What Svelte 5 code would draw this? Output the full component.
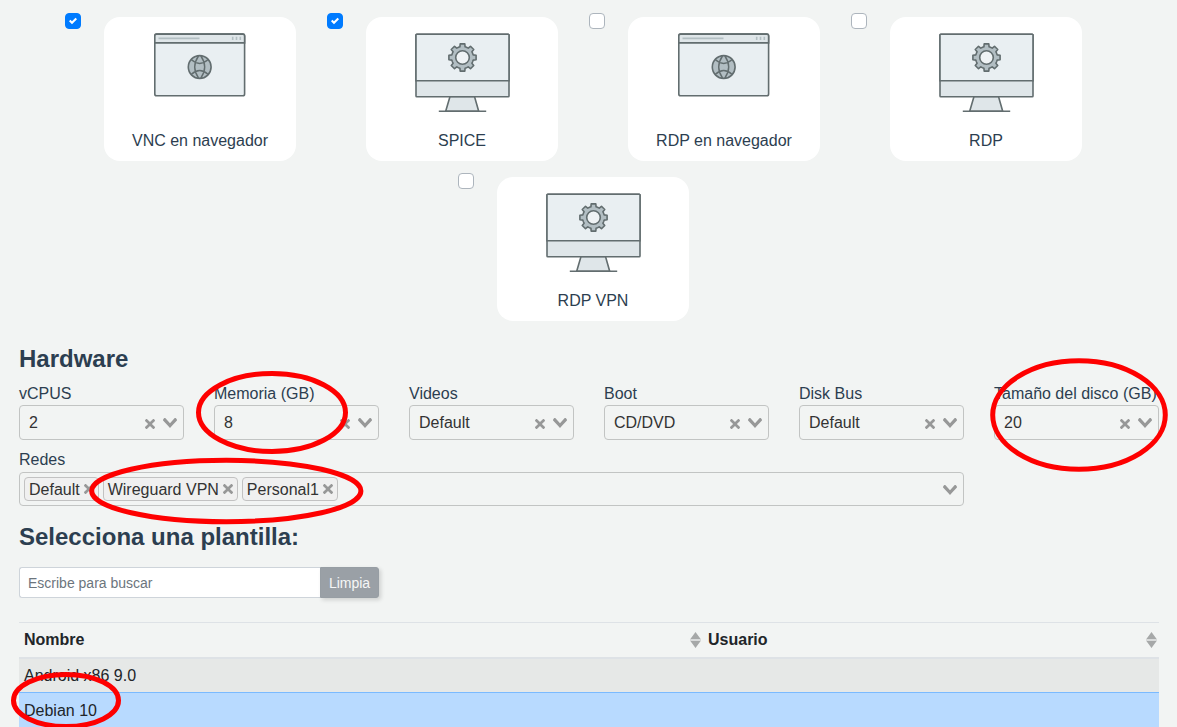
<script>
  const viewers = [
    { name: 'VNC en navegador', icon: 'browser', checked: true },
    { name: 'SPICE', icon: 'desktop', checked: true },
    { name: 'RDP en navegador', icon: 'browser', checked: false },
    { name: 'RDP', icon: 'desktop', checked: false },
    { name: 'RDP VPN', icon: 'desktop', checked: false }
  ];
  const hardware = [
    { label: 'vCPUS', value: '2' },
    { label: 'Memoria (GB)', value: '8' },
    { label: 'Videos', value: 'Default' },
    { label: 'Boot', value: 'CD/DVD' },
    { label: 'Disk Bus', value: 'Default' },
    { label: 'Tamaño del disco (GB)', value: '20' }
  ];
  const networks = ['Default', 'Wireguard VPN', 'Personal1'];
  const columns = ['Nombre', 'Usuario'];
  const templates = [
    { name: 'Android x86 9.0', selected: false },
    { name: 'Debian 10', selected: true }
  ];
  const marks = [
    { cx: 272, cy: 412.5, rx: 73.5, ry: 39 },
    { cx: 1079, cy: 415, rx: 86.3, ry: 54.2 },
    { cx: 226.3, cy: 491, rx: 134.6, ry: 30.7 },
    { cx: 66, cy: 700.5, rx: 52.5, ry: 26 }
  ];

  // Eight-tooth gear outline around the origin.
  const toothPoints = [[-4, -10.2], [-2.6, -10.7], [-2.3, -13.6], [2.3, -13.6], [2.6, -10.7], [4, -10.2]];
  const gear = Array.from({ length: 8 }, (_, i) => {
    const a = (i * Math.PI) / 4;
    return toothPoints
      .map(([x, y]) => `${(x * Math.cos(a) - y * Math.sin(a)).toFixed(2)},${(x * Math.sin(a) + y * Math.cos(a)).toFixed(2)}`)
      .join(' ');
  }).join(' ');
</script>

{#snippet cross()}
  <svg class="cross" width="10" height="10" viewBox="0 0 10 10"><path d="M6.895455 5l2.842897-2.842898c.348864-.348863.348864-.914488 0-1.263636L9.106534.261648c-.348864-.348864-.914489-.348864-1.263636 0L5 3.104545 2.157102.261648c-.348863-.348864-.914488-.348864-1.263636 0L.261648.893466c-.348864.348864-.348864.914489 0 1.263636L3.104545 5 .261648 7.842898c-.348864.348863-.348864.914488 0 1.263636l.631818.631818c.348864.348864.914773.348864 1.263636 0L5 6.895455l2.842898 2.842897c.348863.348864.914772.348864 1.263636 0l.631818-.631818c.348864-.348864.348864-.914489 0-1.263636L6.895455 5z" /></svg>
{/snippet}

{#snippet chevron()}
  <svg class="chevron" width="14" height="10" viewBox="0 0 14 10"><path d="M9.211364 7.59931l4.48338-4.867229c.407008-.441854.407008-1.158247 0-1.60046l-.73712-.80023c-.407008-.441854-1.066904-.441854-1.474243 0L7 5.198617 2.51662.33139c-.407008-.441853-1.066904-.441853-1.474243 0l-.737121.80023c-.407008.441854-.407008 1.158248 0 1.600461l4.48338 4.867228L7 10l2.211364-2.40069z" /></svg>
{/snippet}

<main>
  <section class="viewers">
    {#each viewers as v}
      <div class="viewer">
        <span class="check" class:on={v.checked}>
          {#if v.checked}
            <svg width="8" height="8" viewBox="0 0 8 8"><path fill="#fff" d="M6.564.75l-3.59 3.612-1.538-1.55L0 4.26l2.974 2.99L8 2.193z" /></svg>
          {/if}
        </span>
        <div class="card">
          {#if v.icon === 'browser'}
            <svg width="96" height="96" viewBox="0 -0.6 96 96" fill="none" stroke="#626d6f" stroke-width="1.6">
              <rect x="2.8" y="1.5" width="89.8" height="61.6" rx="1.8" fill="#e9eff2" />
              <path d="M2.8 10.300V3.200a1.8 1.8 0 0 1 1.8-1.7h86.2a1.8 1.8 0 0 1 1.8 1.7v7.100z" fill="#dfe6e9" />
              <path d="M6.500 5.800h41" stroke="#b3bfc3" />
              <path d="M80.700 4.200v3.200M84.500 4.200v3.200M88.300 4.200v3.200" stroke="#b3bfc3" />
              <g transform="translate(47.700 34.400)">
                <circle r="11.400" fill="#b2bec3" />
                <path d="M-1.200-11Q-8.800 0-1.200 11M1.200-11Q8.800 0 1.200 11M-8.500-7.500Q0 .300 8.500-7.500M-8.500 7.500Q0-.300 8.500 7.500" stroke-width="1.400" />
              </g>
            </svg>
          {:else}
            <svg width="96" height="96" viewBox="0 0 96 96" fill="none" stroke="#626d6f" stroke-width="1.600">
              <path d="M36 64.500h24.500L64.700 79.200h-33z" fill="#dfe6e9" />
              <path d="M24.800 79.200h47.400" />
              <rect x="2" y="2.200" width="93" height="62.500" rx=".8" fill="#dfe6e9" />
              <path d="M2 48.700V3a.8.8 0 0 1 .8-.8h91.400a.8.8 0 0 1 .8.8v45.700z" fill="#e9eff2" />
              <g transform="translate(48.500 25.500)">
                <polygon points={gear} fill="#b2bec3" stroke-linejoin="round" />
                <circle r="6.800" fill="#eff3f5" />
              </g>
            </svg>
          {/if}
          <p>{v.name}</p>
        </div>
      </div>
    {/each}
  </section>

  <h4>Hardware</h4>
  <section class="hardware">
    {#each hardware as h}
      <div class="field">
        <span class="label">{h.label}</span>
        <div class="select">
          <span class="value">{h.value}</span>
          {@render cross()}
          {@render chevron()}
        </div>
      </div>
    {/each}
  </section>

  <section class="networks">
    <span class="label">Redes</span>
    <div class="select multi">
      {#each networks as n}
        <span class="tag">{n}{@render cross()}</span>
      {/each}
      <span class="space"></span>
      {@render chevron()}
    </div>
  </section>

  <h4 class="second">Selecciona una plantilla:</h4>
  <div class="search">
    <input placeholder="Escribe para buscar" />
    <button>Limpia</button>
  </div>

  <div class="table">
    <div class="row head">
      {#each columns as c}
        <div class="cell">
          <span>{c}</span>
          <svg width="11" height="16" viewBox="0 0 11 16"><path d="M0 7.500L5.500 0 11 7.500z M0 8.500L5.500 16 11 8.500z" fill="#a6a8a8" /><path d="M.5 8h10" stroke="#d9dbdb" stroke-width="2" /></svg>
        </div>
      {/each}
    </div>
    {#each templates as t}
      <div class="row" class:selected={t.selected}>
        <div class="cell">{t.name}</div>
        <div class="cell"></div>
      </div>
    {/each}
  </div>

  <svg class="marks" width="1177" height="727" viewBox="0 0 1177 727">
    {#each marks as m}
      <ellipse cx={m.cx} cy={m.cy} rx={m.rx} ry={m.ry} fill="none" stroke="#fe0000" stroke-width="5" />
    {/each}
  </svg>
</main>

<style>
  :global(body) { margin: 0; overflow: hidden; background: #f2f4f3; }
  main {
    position: relative;
    box-sizing: border-box;
    width: 1177px;
    height: 727px;
    overflow: hidden;
    padding: 1px 18px 0 19px;
    font: 16px/24px "Liberation Sans", Arial, sans-serif;
    color: #2c3e50;
    background: #f2f4f3;
  }
  svg { display: block; flex: none; }
  .viewers { display: flex; flex-wrap: wrap; justify-content: center; width: 1048px; margin-left: 46px; }
  .viewer { display: flex; align-items: flex-start; width: 262px; height: 160px; }
  .check {
    display: flex; align-items: center; justify-content: center;
    box-sizing: border-box; width: 16px; height: 16px; margin-top: 12px;
    border: 1px solid #adb5bd; border-radius: 4px; background: #fff;
  }
  .check.on { border-color: #007bff; background: #007bff; }
  .card {
    display: flex; flex-direction: column; align-items: center;
    box-sizing: border-box; width: 192px; height: 144px; margin: 16px 0 0 23px; padding-top: 15px;
    border-radius: 16px; background: #fff;
  }
  .card p { margin: 1px 0 0; }
  h4 { margin: 23px 0 9px; font-size: 24px; line-height: 29px; font-weight: 700; }
  .hardware { display: flex; gap: 30px; }
  .field { width: 165px; }
  .label { display: block; height: 23px; white-space: nowrap; }
  .select {
    display: flex; align-items: center; box-sizing: border-box; height: 35px; padding: 0 6px 0 9px;
    border: 1px solid #c2c4c3; border-radius: 4px; color: #333;
  }
  .value { flex: 1; }
  .cross, .chevron { fill: #979898; }
  .select > .cross { margin: 3px 8px 0 0; }
  .networks { width: 945px; margin-top: 8px; }
  .multi { height: 34px; margin-top: 1px; padding-left: 4px; gap: 4px; }
  .multi .chevron { margin-top: 1px; }
  .tag {
    display: flex; align-items: center; gap: 4px; box-sizing: border-box; height: 24px; padding: 1px 4px 0;
    border: 1px solid #c2c2c2; border-radius: 4px; background: #f0f0f0; line-height: 22px;
  }
  .tag .cross { margin-bottom: 1px; }
  .space { flex: 1; }
  h4.second { margin: 16px 0; }
  .search { display: flex; width: 360px; height: 31px; }
  input, button { box-sizing: border-box; height: 31px; font: 14px/21px "Liberation Sans", Arial, sans-serif; padding: 4px 8px; }
  input { width: 301px; border: 1px solid #ced4da; border-right: 0; border-radius: 3px 0 0 3px; background: #fff; }
  input::placeholder { color: #6c757d; opacity: 1; }
  button { width: 59px; padding: 5px 7px 3px; border: 1px solid #979ea4; border-radius: 0 3px 3px 0; background: #9aa0a6; color: #f6f7f7; box-shadow: 2px 2px 4px rgba(0, 0, 0, .15); }
  .table { width: 1140px; margin-top: 24px; color: #212529; }
  .row { display: flex; box-sizing: border-box; height: 33px; background: #e6e8e7; }
  .row.head { height: 37px; border-top: 1px solid #dee2e6; border-bottom: 2px solid #dee2e6; background: none; font-weight: 700; }
  .row.selected { height: 36px; border-top: 1px solid #7abaff; background: #b8daff; }
  .cell { display: flex; align-items: center; justify-content: space-between; box-sizing: border-box; width: 684px; padding: 0 2px 0 5px; }
  .cell:last-child { width: 456px; }
  .marks { position: absolute; left: 0; top: 0; pointer-events: none; }
</style>
